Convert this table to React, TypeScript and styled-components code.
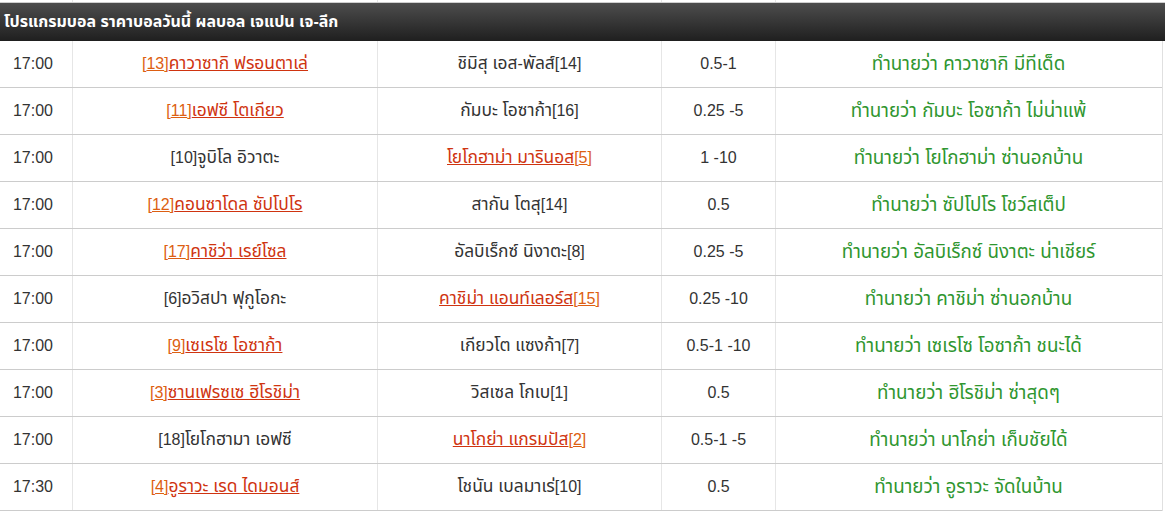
import React from "react";
import styled, { createGlobalStyle } from "styled-components";

const Global = createGlobalStyle`
  html, body { margin: 0; padding: 0; background: #fff; }
  body { font-family: "Liberation Sans", "Noto Sans Thai", "Noto Sans", sans-serif; }
`;

const COLS = "72px 305px 284px 114px 386px";

const Page = styled.div`
  width: 1165px;
  overflow: hidden;
`;

const Stub = styled.div`
  display: grid;
  grid-template-columns: ${COLS};
  height: 2px;
  border-bottom: 1px solid #cfcfcf;
  & > div + div { border-left: 1px solid #e6e6e6; }
`;

const Header = styled.div`
  height: 38px;
  display: flex;
  align-items: center;
  padding-left: 4px;
  background: linear-gradient(#4d4d4d, #1f1f1f);
  color: #fff;
  font-weight: bold;
  font-size: 16px;
`;

const Table = styled.div`
  width: 1162px;
  border-right: 1px solid #e0e0e0;
`;

const Row = styled.div`
  display: grid;
  grid-template-columns: ${COLS};
  height: 46px;
  border-bottom: 1px solid #cccccc;
  font-size: 16px;
  color: #333;
`;

const Cell = styled.div<{ $green?: boolean; $time?: boolean }>`
  display: flex;
  align-items: center;
  justify-content: center;
  white-space: nowrap;
  padding-right: ${(p) => (p.$time ? "6px" : "0")};
  font-size: ${(p) => (p.$green ? "18.8px" : "16px")};
  color: ${(p) => (p.$green ? "#2f962f" : "#333")};
  & + & { border-left: 1px solid #e6e6e6; }
`;

const Thai = styled.span`
  font-size: 17.4px;
`;

const Rank = styled.span`
  color: #dd5f12;
  & u { text-decoration: underline; }
`;

const TeamLink = styled.a`
  color: #cf3410;
  text-decoration: underline;
  cursor: pointer;
`;

function ThaiText({ text }: { text: string }) {
  const parts = text.split(/([\u0E00-\u0E7F][\u0E00-\u0E7F ]*)/).filter(Boolean);
  return (
    <>
      {parts.map((p, i) => (/[\u0E00-\u0E7F]/.test(p) ? <Thai key={i}>{p}</Thai> : <React.Fragment key={i}>{p}</React.Fragment>))}
    </>
  );
}

type Team = { name: string; rank: string; link?: boolean };
type Match = { time: string; home: Team; away: Team; odds: string; tip: string };

const matches: Match[] = [
  { time: "17:00", home: { name: "คาวาซากิ ฟรอนตาเล่", rank: "13", link: true }, away: { name: "ชิมิสุ เอส-พัลส์", rank: "14" }, odds: "0.5-1", tip: "ทำนายว่า คาวาซากิ มีทีเด็ด" },
  { time: "17:00", home: { name: "เอฟซี โตเกียว", rank: "11", link: true }, away: { name: "กัมบะ โอซาก้า", rank: "16" }, odds: "0.25 -5", tip: "ทำนายว่า กัมบะ โอซาก้า ไม่น่าแพ้" },
  { time: "17:00", home: { name: "จูบิโล อิวาตะ", rank: "10" }, away: { name: "โยโกฮาม่า มารินอส", rank: "5", link: true }, odds: "1 -10", tip: "ทำนายว่า โยโกฮาม่า ซ่านอกบ้าน" },
  { time: "17:00", home: { name: "คอนซาโดล ซัปโปโร", rank: "12", link: true }, away: { name: "สากัน โตสุ", rank: "14" }, odds: "0.5", tip: "ทำนายว่า ซัปโปโร โชว์สเต็ป" },
  { time: "17:00", home: { name: "คาชิว่า เรย์โซล", rank: "17", link: true }, away: { name: "อัลบิเร็กซ์ นิงาตะ", rank: "8" }, odds: "0.25 -5", tip: "ทำนายว่า อัลบิเร็กซ์ นิงาตะ น่าเชียร์" },
  { time: "17:00", home: { name: "อวิสปา ฟุกูโอกะ", rank: "6" }, away: { name: "คาชิม่า แอนท์เลอร์ส", rank: "15", link: true }, odds: "0.25 -10", tip: "ทำนายว่า คาชิม่า ซ่านอกบ้าน" },
  { time: "17:00", home: { name: "เซเรโซ โอซาก้า", rank: "9", link: true }, away: { name: "เกียวโต แซงก้า", rank: "7" }, odds: "0.5-1 -10", tip: "ทำนายว่า เซเรโซ โอซาก้า ชนะได้" },
  { time: "17:00", home: { name: "ซานเฟรซเซ ฮิโรชิม่า", rank: "3", link: true }, away: { name: "วิสเซล โกเบ", rank: "1" }, odds: "0.5", tip: "ทำนายว่า ฮิโรชิม่า ซ่าสุดๆ" },
  { time: "17:00", home: { name: "โยโกฮามา เอฟซี", rank: "18" }, away: { name: "นาโกย่า แกรมปัส", rank: "2", link: true }, odds: "0.5-1 -5", tip: "ทำนายว่า นาโกย่า เก็บชัยได้" },
  { time: "17:30", home: { name: "อูราวะ เรด ไดมอนส์", rank: "4", link: true }, away: { name: "โชนัน เบลมาเร่", rank: "10" }, odds: "0.5", tip: "ทำนายว่า อูราวะ จัดในบ้าน" },
];

function TeamCell({ team, rankFirst }: { team: Team; rankFirst: boolean }) {
  if (!team.link) {
    return (
      <Cell>
        {rankFirst && `[${team.rank}]`}
        <ThaiText text={team.name} />
        {!rankFirst && `[${team.rank}]`}
      </Cell>
    );
  }
  const rank = (
    <Rank>
      [<u>{team.rank}</u>]
    </Rank>
  );
  return (
    <Cell>
      {rankFirst && rank}
      <TeamLink>
        <ThaiText text={team.name} />
      </TeamLink>
      {!rankFirst && rank}
    </Cell>
  );
}

export default function App() {
  return (
    <Page>
      <Global />
      <Stub>
        <div />
        <div />
        <div />
        <div />
        <div />
      </Stub>
      <Header>โปรแกรมบอล ราคาบอลวันนี้ ผลบอล เจแปน เจ-ลีก</Header>
      <Table>
        {matches.map((m, i) => (
          <Row key={i}>
            <Cell $time>{m.time}</Cell>
            <TeamCell team={m.home} rankFirst />
            <TeamCell team={m.away} rankFirst={false} />
            <Cell>{m.odds}</Cell>
            <Cell $green>{m.tip}</Cell>
          </Row>
        ))}
      </Table>
    </Page>
  );
}
